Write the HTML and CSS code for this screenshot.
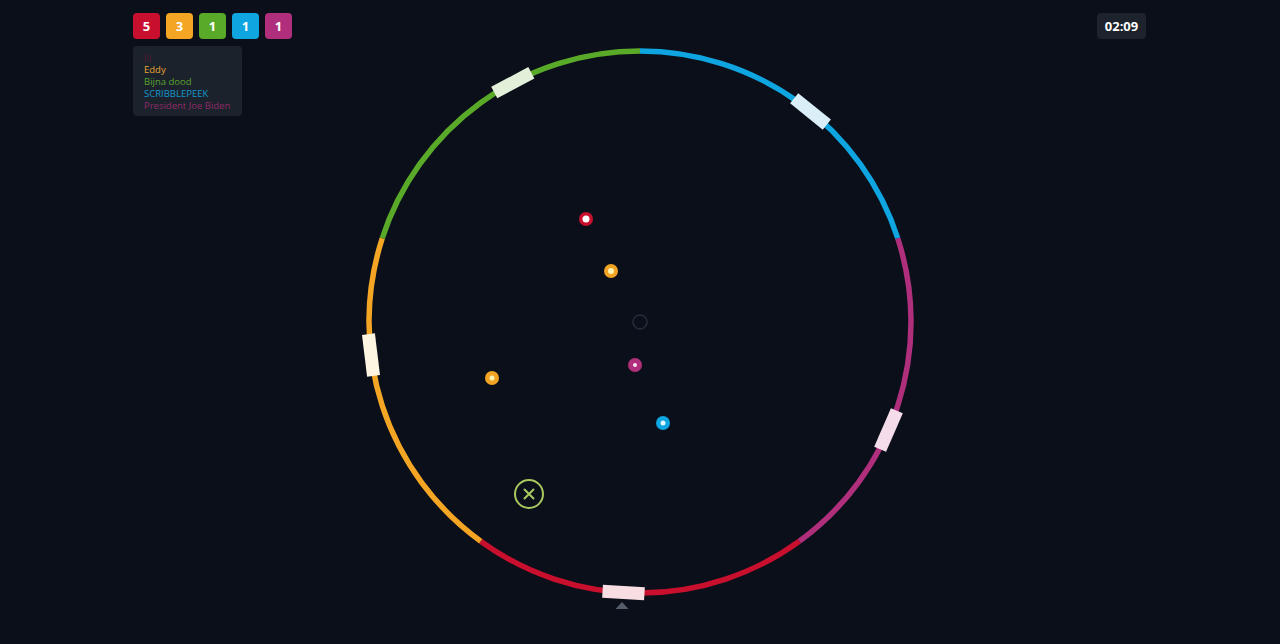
FILE: index.html
```html
<!DOCTYPE html>
<html lang="en">
  <head>
    <meta charset="UTF-8" />
    <meta name="viewport" content="width=device-width, initial-scale=1.0" />
    <title>Ring Arena</title>
    <link rel="stylesheet" href="styles.css">
  </head>
  <body>
    <div class="game">
      <!-- HUD: scores, players and timer -->
      <div class="hud">
        <div class="left">
          <div class="scores">
            <span class="score red">5</span>
            <span class="score orange">3</span>
            <span class="score green">1</span>
            <span class="score blue">1</span>
            <span class="score magenta">1</span>
          </div>
          <ul class="players">
            <li class="dead">Jij</li>
            <li class="orange-text">Eddy</li>
            <li class="green-text">Bijna dood</li>
            <li class="blue-text">SCRIBBLEPEEK</li>
            <li class="magenta-text">President Joe Biden</li>
          </ul>
        </div>
        <div class="timer">02:09</div>
      </div>

      <!-- Arena -->
      <svg class="arena" width="1280" height="644" viewBox="0 0 1280 644">
        <g fill="none" stroke-width="5.5">
          <path d="M640 51 A271 271 0 0 1 897.74 238.26" stroke="#0ea5e0" />
          <path d="M897.74 238.26 A271 271 0 0 1 799.29 541.24" stroke="#b02f7c" />
          <path d="M799.29 541.24 A271 271 0 0 1 480.71 541.24" stroke="#c8102e" />
          <path d="M480.71 541.24 A271 271 0 0 1 382.26 238.26" stroke="#f5a524" />
          <path d="M382.26 238.26 A271 271 0 0 1 640 51" stroke="#5aaa2a" />
        </g>

        <!-- paddles -->
        <g>
          <rect x="-21" y="-6.5" width="42" height="13" fill="#e2f0da" transform="translate(512.8 82.7) rotate(-28)" />
          <rect x="-21" y="-6.5" width="42" height="13" fill="#d9eef7" transform="translate(810.5 111.4) rotate(39)" />
          <rect x="-21" y="-6.5" width="42" height="13" fill="#f4dcea" transform="translate(888.5 430) rotate(113.5)" />
          <rect x="-21" y="-6.5" width="42" height="13" fill="#f8dde3" transform="translate(623.5 592.5) rotate(183.5)" />
          <rect x="-21" y="-6.5" width="42" height="13" fill="#fdf4e2" transform="translate(371 355) rotate(263)" />
        </g>

        <polygon points="615.5,609 628.5,609 622,602" fill="#565d6a" />

        <!-- center -->
        <circle cx="640" cy="322" r="7" fill="none" stroke="#252c39" stroke-width="1.5" />

        <!-- balls -->
        <circle cx="586" cy="219" r="7" fill="#c8102e" />
        <circle cx="586" cy="219" r="3.5" fill="#ffffff" />
        <circle cx="611" cy="271" r="7" fill="#f2a324" />
        <circle cx="611" cy="271" r="3" fill="#fff3b0" />
        <circle cx="635" cy="365" r="7" fill="#b02f7c" />
        <circle cx="635" cy="365" r="2" fill="#fbe1f0" />
        <circle cx="492" cy="378" r="7" fill="#f2a324" />
        <circle cx="492" cy="378" r="2.5" fill="#fff3b0" />
        <circle cx="663" cy="423" r="7" fill="#0ea5e0" />
        <circle cx="663" cy="423" r="2.5" fill="#e4f7ff" />

        <!-- target -->
        <g fill="none" stroke="#a9c85e" stroke-width="2" stroke-linecap="round">
          <circle cx="529" cy="494" r="14" />
          <path d="M524.5 489.5 L533.5 498.5 M533.5 489.5 L524.5 498.5" />
        </g>
      </svg>
    </div>
  </body>
</html>
```

FILE: styles.css
```css
body {
  margin: 0;
  padding: 0;
  background-color: #0a0f1a;
  font-family: "Open Sans", "DejaVu Sans", sans-serif;
  overflow: hidden;
}

.game {
  position: relative;
  width: 1280px;
  height: 644px;
}

.arena {
  display: block;
}

.hud {
  position: absolute;
  top: 13px;
  left: 133px;
  right: 134px;
  display: flex;
  justify-content: space-between;
  align-items: flex-start;
}

.scores {
  display: flex;
  gap: 6px;
}

.score {
  width: 27px;
  height: 26px;
  border-radius: 4px;
  display: flex;
  align-items: center;
  justify-content: center;
  color: #fff;
  font-size: 13px;
  font-weight: 700;
}

.score.red { background-color: #c8102e; }
.score.orange { background-color: #f5a524; }
.score.green { background-color: #5aaa2a; }
.score.blue { background-color: #0ea5e0; }
.score.magenta { background-color: #b02f7c; }

.players {
  list-style: none;
  margin: 7px 0 0;
  padding: 6px 11px 4px 11px;
  width: 87px;
  background-color: #1b222c;
  border-radius: 4px;
  font-size: 9.5px;
  line-height: 12px;
}

.players li {
  white-space: nowrap;
}

.dead { color: #5a1a2c; }
.orange-text { color: #e9a230; }
.green-text { color: #5aa32d; }
.blue-text { color: #1496cc; }
.magenta-text { color: #8f2a68; }

.timer {
  width: 49px;
  height: 26px;
  border-radius: 4px;
  background-color: #1d232d;
  color: #fff;
  font-size: 13px;
  font-weight: 700;
  display: flex;
  align-items: center;
  justify-content: center;
}
```
